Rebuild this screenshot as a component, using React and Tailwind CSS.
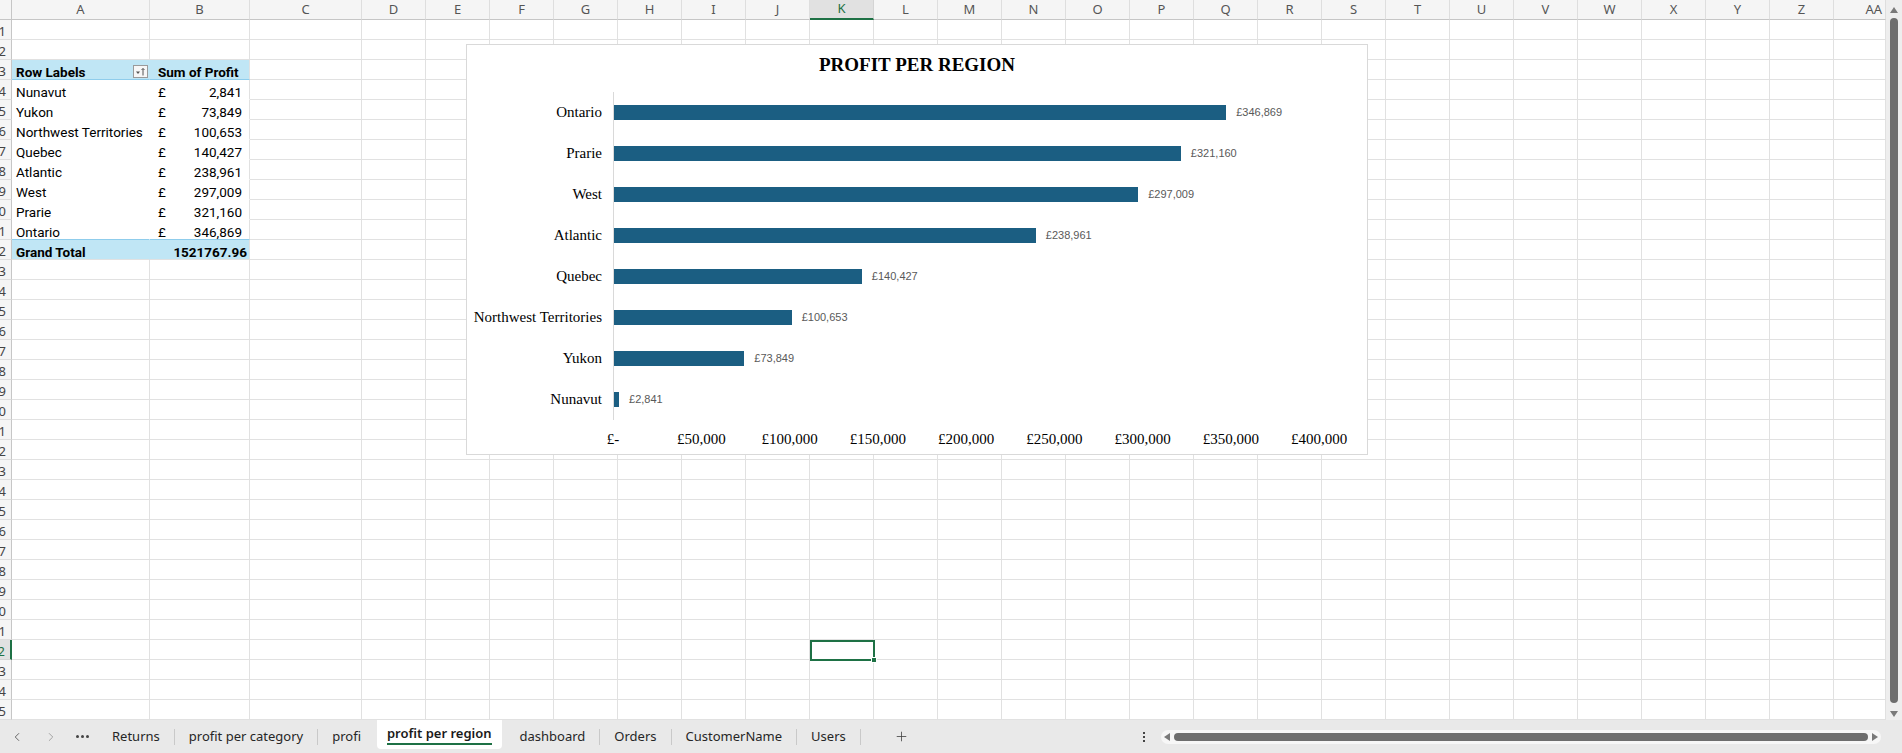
import React from 'react';
import { ChevronLeft, ChevronRight, Plus } from 'lucide-react';

const letters = ['A', 'B', 'C', 'D', 'E', 'F', 'G', 'H', 'I', 'J', 'K', 'L', 'M', 'N', 'O', 'P', 'Q', 'R', 'S', 'T', 'U', 'V', 'W', 'X', 'Y', 'Z', 'AA'];

const colWidth = (i) => {
  if (i === 0) return 'w-[138px]';
  if (i === 1) return 'w-[100px]';
  if (i === 2) return 'w-[112px]';
  if (i === 26) return 'w-[52px]';
  return 'w-[64px]';
};

const pivot = [
  ['Nunavut', '2,841'],
  ['Yukon', '73,849'],
  ['Northwest Territories', '100,653'],
  ['Quebec', '140,427'],
  ['Atlantic', '238,961'],
  ['West', '297,009'],
  ['Prarie', '321,160'],
  ['Ontario', '346,869'],
];

const regions = [
  ['Ontario', 346869],
  ['Prarie', 321160],
  ['West', 297009],
  ['Atlantic', 238961],
  ['Quebec', 140427],
  ['Northwest Territories', 100653],
  ['Yukon', 73849],
  ['Nunavut', 2841],
];

const ticks = ['£-', '£50,000', '£100,000', '£150,000', '£200,000', '£250,000', '£300,000', '£350,000', '£400,000'];

const cellLines = (r, c) => {
  if (r === 3 && c === 0) return 'bg-[#c0e6f5] border-r-[#c0e6f5] border-b-[#8fcdec]';
  if (r === 3 && c === 1) return 'bg-[#c0e6f5] border-r-[#e1e1e1] border-b-[#8fcdec]';
  if (r === 11 && c === 0) return 'border-r-white border-b-[#8fcdec]';
  if (r === 11 && c === 1) return 'border-r-[#e1e1e1] border-b-[#8fcdec]';
  if (r >= 4 && r <= 10 && c === 0) return 'border-r-white border-b-white';
  if (r >= 4 && r <= 10 && c === 1) return 'border-r-[#e1e1e1] border-b-white';
  if (r === 12 && c === 0) return 'bg-[#c0e6f5] border-r-[#c0e6f5] border-b-[#e1e1e1]';
  if (r === 12 && c === 1) return 'bg-[#c0e6f5] border-r-[#e1e1e1] border-b-[#e1e1e1]';
  return 'border-r-[#e1e1e1] border-b-[#e1e1e1]';
};

const FilterButton = () => (
  <div className="ml-auto mr-[1px] -mt-[1px] self-start w-[15px] h-[13px] border border-[#9a9a9a] bg-[#f7f7f7] flex items-center justify-center">
    <svg width="11" height="9" viewBox="0 0 11 9">
      <path d="M1 4.5 L5 4.5 L3 7 Z" fill="#555" />
      <path d="M8 8.5 V1.5 M6.5 3 L8 1.5 L9.5 3" stroke="#555" strokeWidth="1" fill="none" />
    </svg>
  </div>
);

const cellContent = (r, c) => {
  if (r === 3 && c === 0)
    return (
      <>
        <span className="pl-[4px] font-bold">Row Labels</span>
        <FilterButton />
      </>
    );
  if (r === 3 && c === 1) return <span className="pl-[8px] font-bold">Sum of Profit</span>;
  if (r >= 4 && r <= 11) {
    const [name, val] = pivot[r - 4];
    if (c === 0) return <span className="pl-[4px] whitespace-nowrap">{name}</span>;
    if (c === 1)
      return (
        <>
          <span className="pl-[8px]">£</span>
          <span className="ml-auto pr-[7px]">{val}</span>
        </>
      );
  }
  if (r === 12 && c === 0) return <span className="pl-[4px] font-bold">Grand Total</span>;
  if (r === 12 && c === 1) return <span className="ml-auto pr-[2px] font-bold">1521767.96</span>;
  return null;
};

const Chart = () => (
  <div className="absolute left-[466px] top-[44px] w-[902px] h-[411px] bg-white border border-[#d9d9d9] flex flex-col">
    <div className="h-[47px] pt-[8px] text-center font-['Liberation_Serif',serif] font-bold text-[19px] leading-[24px] text-black">
      PROFIT PER REGION
    </div>
    <div className="flex">
      <div className="w-[146px] pr-[11px] flex flex-col">
        {regions.map(([name]) => (
          <div key={name} className="h-[41px] flex items-center justify-end font-['Liberation_Serif',serif] text-[15px] text-black whitespace-nowrap">
            {name}
          </div>
        ))}
      </div>
      <div className="border-l border-[#d9d9d9] w-[707px] flex flex-col">
        {regions.map(([name, v]) => (
          <div key={name} className="h-[41px] flex items-center">
            <div className="h-[15px] bg-[#1b5e82]" style={{ width: `${(v / 400000) * 706}px` }} />
            <span className="ml-[10px] font-['Liberation_Sans',sans-serif] text-[11px] text-[#595959]">
              £{v.toLocaleString('en-GB')}
            </span>
          </div>
        ))}
      </div>
    </div>
    <div className="relative ml-[146px] mt-[9px] w-[706px] h-[20px]">
      {ticks.map((t, i) => (
        <span
          key={t}
          className="absolute top-0 -translate-x-1/2 font-['Liberation_Serif',serif] text-[15px] leading-[20px] text-black whitespace-nowrap"
          style={{ left: `${i * 88.25}px` }}
        >
          {t}
        </span>
      ))}
    </div>
  </div>
);

const Triangle = ({ dir }) => {
  const d = {
    up: 'M0 6 L4 0 L8 6 Z',
    down: 'M0 0 L8 0 L4 6 Z',
    left: 'M6 0 L6 8 L0 4 Z',
    right: 'M0 0 L6 4 L0 8 Z',
  }[dir];
  const vert = dir === 'up' || dir === 'down';
  return (
    <svg width={vert ? 8 : 6} height={vert ? 6 : 8} viewBox={vert ? '0 0 8 6' : '0 0 6 8'}>
      <path d={d} fill="#7a7a7a" />
    </svg>
  );
};

const Sep = () => <div className="w-px h-[16px] bg-[#c9c9c9]" />;

const Tab = ({ children }) => (
  <div className="px-[14px] text-[13px] text-[#262626] whitespace-nowrap">{children}</div>
);

export default function App() {
  const rows = Array.from({ length: 35 }, (_, i) => i + 1);
  return (
    <div className="w-[1902px] h-[753px] overflow-hidden bg-white font-['Noto_Sans',sans-serif] flex flex-col">
      <div className="flex h-[720px]">
        <div className="relative w-[1886px] overflow-hidden">
          <div className="flex h-[20px] bg-[#f5f5f5]">
            <div className="w-[12px] shrink-0 border-r border-b border-[#c6c6c6]" />
            {letters.map((l, i) => (
              <div
                key={l}
                className={`${colWidth(i)} shrink-0 flex items-center justify-center text-[13px] ${
                  l === 'K'
                    ? 'bg-[#e1e1e1] text-[#1e7145] border-b-2 border-b-[#1e7145] border-r border-r-[#d4d4d4]'
                    : 'text-[#555] border-r border-b border-r-[#dedede] border-b-[#c6c6c6]'
                } ${i === 26 ? 'justify-end pr-[3px]' : ''}`}
              >
                {l}
              </div>
            ))}
          </div>
          {rows.map((r) => (
            <div key={r} className="flex h-[20px]">
              <div
                className={`w-[12px] shrink-0 flex items-center justify-end overflow-hidden pr-[5px] pt-[3px] text-[13px] leading-none ${
                  r === 32
                    ? 'bg-[#e1e1e1] text-[#1e7145] border-r-2 border-r-[#1e7145] border-b border-b-[#d4d4d4]'
                    : 'bg-[#f5f5f5] text-[#444] border-r border-b border-r-[#c6c6c6] border-b-[#dedede]'
                }`}
              >
                {r}
              </div>
              {letters.map((l, c) => (
                <div
                  key={l}
                  className={`${colWidth(c)} shrink-0 border-r border-b flex items-center pt-[6px] font-['Roboto',sans-serif] text-[13.5px] text-black ${cellLines(r, c)}`}
                >
                  {cellContent(r, c)}
                </div>
              ))}
            </div>
          ))}
          <Chart />
          <div className="absolute left-[810px] top-[640px] w-[65px] h-[21px] border-2 border-[#1e7145]">
            <div className="absolute -right-[4px] -bottom-[4px] w-[6px] h-[6px] bg-[#1e7145] border border-white" />
          </div>
        </div>
        <div className="w-[16px] bg-[#eeeeee] flex flex-col items-center pt-[7px]">
          <Triangle dir="up" />
          <div className="mt-[5px] w-[8px] h-[685px] rounded-full bg-[#6e6e6e]" />
          <div className="mt-[8px]">
            <Triangle dir="down" />
          </div>
        </div>
      </div>
      <div className="h-[33px] bg-[#e9e9e9] flex items-center">
        <div className="w-[98px] flex items-center">
          <ChevronLeft className="ml-[10px] text-[#555]" size={14} strokeWidth={1.5} />
          <ChevronRight className="ml-[20px] text-[#999]" size={14} strokeWidth={1.5} />
          <div className="ml-[18px] flex gap-[2px]">
            <div className="w-[3px] h-[3px] rounded-full bg-[#444]" />
            <div className="w-[3px] h-[3px] rounded-full bg-[#444]" />
            <div className="w-[3px] h-[3px] rounded-full bg-[#444]" />
          </div>
        </div>
        <Tab>Returns</Tab>
        <Sep />
        <Tab>profit per category</Tab>
        <Sep />
        <Tab>profi</Tab>
        <div className="self-start h-[29px] ml-[2px] px-[10px] bg-white rounded-b-[4px] flex flex-col items-center justify-center">
          <span className="text-[13px] font-semibold text-[#1a1a1a] whitespace-nowrap leading-[18px]">profit per region</span>
          <div className="w-full h-[2px] bg-[#1e7145] mt-[1px]" />
        </div>
        <div className="w-[4px]" />
        <Tab>dashboard</Tab>
        <Sep />
        <Tab>Orders</Tab>
        <Sep />
        <Tab>CustomerName</Tab>
        <Sep />
        <Tab>Users</Tab>
        <Sep />
        <Plus className="ml-[33px] text-[#444]" size={15} strokeWidth={1.3} />
        <div className="flex-1" />
        <div className="mr-[16px] flex flex-col gap-[2px]">
          <div className="w-[2px] h-[2px] bg-[#444]" />
          <div className="w-[2px] h-[2px] bg-[#444]" />
          <div className="w-[2px] h-[2px] bg-[#444]" />
        </div>
        <div className="w-[720px] h-[14px] mr-[21px] rounded-full bg-[#f7f7f7] flex items-center px-[3px] gap-[4px]">
          <Triangle dir="left" />
          <div className="flex-1 h-[8px] rounded-full bg-[#6e6e6e]" />
          <Triangle dir="right" />
        </div>
      </div>
    </div>
  );
}
